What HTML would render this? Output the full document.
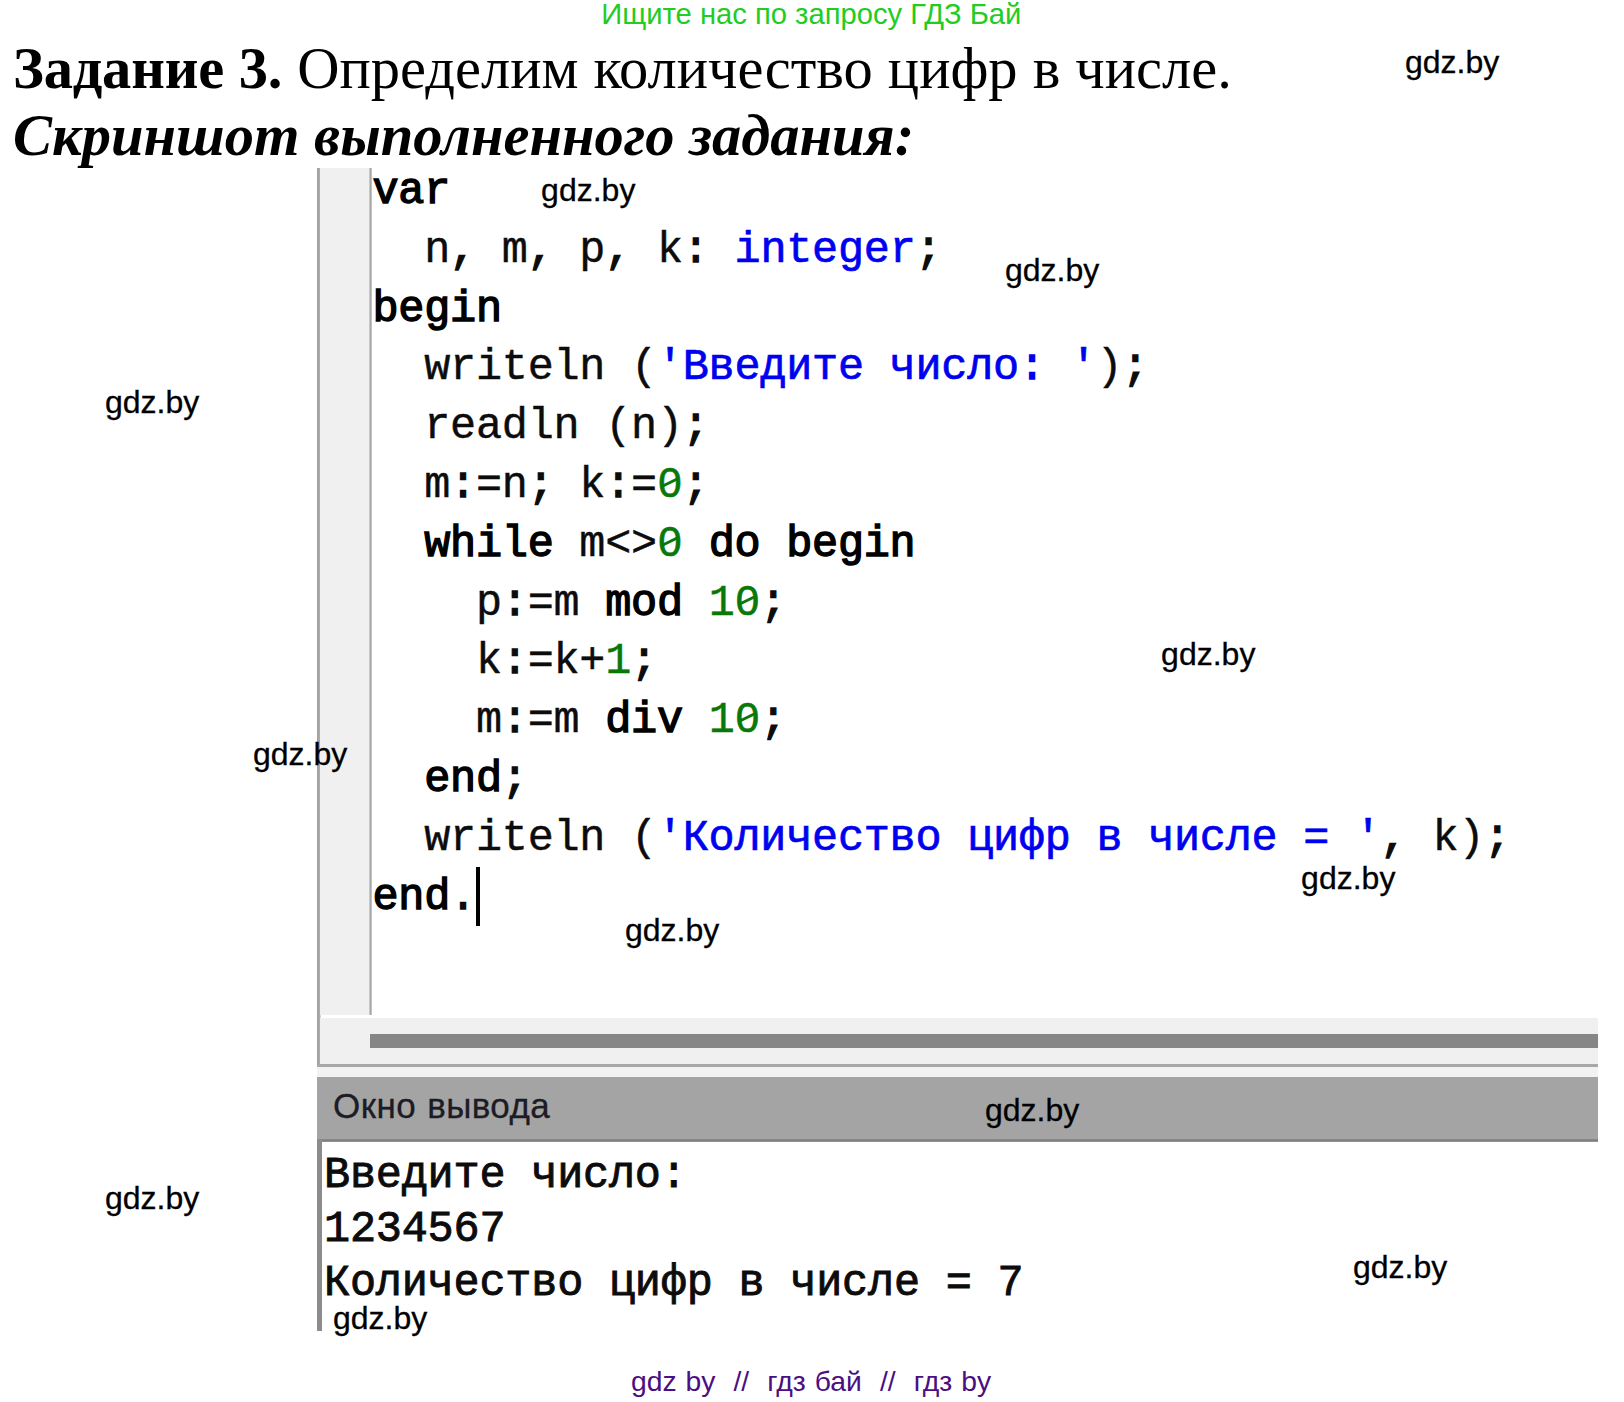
<!DOCTYPE html>
<html lang="ru">
<head>
<meta charset="utf-8">
<title>Задание 3</title>
<style>
html,body{margin:0;padding:0;background:#fff;}
body{width:1624px;height:1402px;position:relative;overflow:hidden;font-family:"Liberation Sans",sans-serif;color:#000;}
.abs{position:absolute;white-space:pre;}
.box{position:absolute;}
/* top / bottom promo lines */
#top{left:0;width:1622.6px;text-align:center;top:-3.5px;font-size:29.2px;line-height:34px;color:#22cc22;}
#bot{left:0;width:1622px;text-align:center;top:1363.4px;font-size:28.3px;line-height:36px;word-spacing:1.15px;color:#4b0f82;}
/* headings */
.h{font-family:"Liberation Serif",serif;font-size:58.5px;line-height:68px;left:13px;}
#h1{top:34.6px;word-spacing:0.4px;}
#h1 b{letter-spacing:-0.2px;}
#h2{top:102.2px;font-weight:bold;font-style:italic;}
/* watermarks */
.wm{font-size:32px;line-height:36px;color:#000;-webkit-text-stroke:0.3px #000;}
/* code */
.code{font-family:"Liberation Mono",monospace;font-size:43.5px;letter-spacing:-0.25px;line-height:58.8px;left:372.5px;color:#0c0c0c;-webkit-text-stroke:0.45px currentColor;}
.code b{color:#000;font-weight:normal;-webkit-text-stroke:1.4px #000;}
.s{color:#0000f0;-webkit-text-stroke:0.7px currentColor;}
.p{-webkit-text-stroke:1.3px currentColor;}
.n{color:#087808;}
.z{display:inline-block;position:relative;width:25.85px;height:42px;line-height:42px;text-align:center;font-family:"Liberation Sans",sans-serif;font-size:42px;letter-spacing:0;-webkit-text-stroke:0.7px currentColor;}
.z::after{content:"";position:absolute;left:50%;top:20.5px;width:16px;height:3px;margin:-1.5px 0 0 -8px;background:currentColor;transform:rotate(-26deg);}
.out{font-family:"Liberation Mono",monospace;font-size:43.5px;letter-spacing:-0.2px;line-height:54.15px;left:324px;color:#0c0c0c;-webkit-text-stroke:0.9px currentColor;}
</style>
</head>
<body>
<div id="top" class="abs">Ищите нас по запросу ГДЗ Бай</div>
<div id="h1" class="abs h"><b>Задание 3.</b> Определим количество цифр в числе.</div>
<div id="h2" class="abs h">Скриншот выполненного задания:</div>

<!-- IDE frame -->
<div class="box" style="left:317px;top:168px;width:4px;height:899px;background:linear-gradient(to right,#a0a0a0,#a8a8a8 60%,#e0e0e0);"></div>
<div class="box" style="left:320px;top:168px;width:49px;height:847px;background:#f0f0f0;"></div>
<div class="box" style="left:369px;top:168px;width:3px;height:847px;background:linear-gradient(to right,#d8d8d8,#a8a8a8 50%,#d0d0d0);"></div>
<div class="box" style="left:320px;top:1018px;width:1278px;height:46px;background:#f0f0f0;"></div>
<div class="box" style="left:370px;top:1034px;width:1228px;height:14px;background:#868686;"></div>
<div class="box" style="left:317px;top:1064px;width:1281px;height:3px;background:#a8a8a8;"></div>
<div class="box" style="left:317px;top:1067px;width:1281px;height:10px;background:#f2f2f2;"></div>
<!-- output panel -->
<div class="box" style="left:317px;top:1076.5px;width:1281px;height:63px;background:#a4a4a4;"></div>
<div class="box" style="left:317px;top:1139px;width:1281px;height:3px;background:linear-gradient(#8c8c8c,#808080 50%,#9a9a9a);"></div>
<div class="box" style="left:317px;top:1139px;width:5px;height:191.5px;background:#8c8c8c;"></div>
<div class="abs" style="left:333px;top:1086px;font-size:35px;line-height:40px;letter-spacing:0.42px;word-spacing:1px;color:#1c1c24;-webkit-text-stroke:0.3px #1c1c24;">Окно вывода</div>

<!-- code -->
<div class="abs code" style="top:163px;"><b>var</b>
  n<span class="p">,</span> m<span class="p">,</span> p<span class="p">,</span> k<span class="p">:</span> <span class="s">integer</span><span class="p">;</span>
<b>begin</b>
  writeln (<span class="s">'Введите число<span class="p">:</span> '</span>)<span class="p">;</span>
  readln (n)<span class="p">;</span>
  m<span class="p">:</span>=n<span class="p">;</span> k<span class="p">:</span>=<span class="n"><span class="z">0</span></span><span class="p">;</span>
  <b>while</b> m&lt;&gt;<span class="n"><span class="z">0</span></span> <b>do</b> <b>begin</b>
    p<span class="p">:</span>=m <b>mod</b> <span class="n">1<span class="z">0</span></span><span class="p">;</span>
    k<span class="p">:</span>=k+<span class="n">1</span><span class="p">;</span>
    m<span class="p">:</span>=m <b>div</b> <span class="n">1<span class="z">0</span></span><span class="p">;</span>
  <b>end</b><span class="p">;</span>
  writeln (<span class="s">'Количество цифр в числе = '</span><span class="p">,</span> k)<span class="p">;</span>
<b>end</b><span class="p">.</span></div>
<div class="box" style="left:476px;top:867px;width:4px;height:59px;background:#000;"></div>

<!-- output -->
<div class="abs out" style="top:1148.5px;">Введите число:
1234567
Количество цифр в числе = 7</div>

<!-- watermarks -->
<div class="abs wm" style="left:1405.0px;top:44.2px;">gdz.by</div>
<div class="abs wm" style="left:541.1px;top:172.3px;">gdz.by</div>
<div class="abs wm" style="left:1005.0px;top:252.3px;">gdz.by</div>
<div class="abs wm" style="left:105.0px;top:384.2px;">gdz.by</div>
<div class="abs wm" style="left:1161.1px;top:636.4px;">gdz.by</div>
<div class="abs wm" style="left:253.0px;top:736.4px;">gdz.by</div>
<div class="abs wm" style="left:1301.1px;top:860.4px;">gdz.by</div>
<div class="abs wm" style="left:625.0px;top:912.2px;">gdz.by</div>
<div class="abs wm" style="left:985.0px;top:1092.2px;">gdz.by</div>
<div class="abs wm" style="left:105.0px;top:1180.2px;">gdz.by</div>
<div class="abs wm" style="left:1353.0px;top:1248.5px;">gdz.by</div>
<div class="abs wm" style="left:333.0px;top:1300.2px;">gdz.by</div>

<div id="bot" class="abs">gdz by  //  гдз бай  //  гдз by</div>
</body>
</html>
